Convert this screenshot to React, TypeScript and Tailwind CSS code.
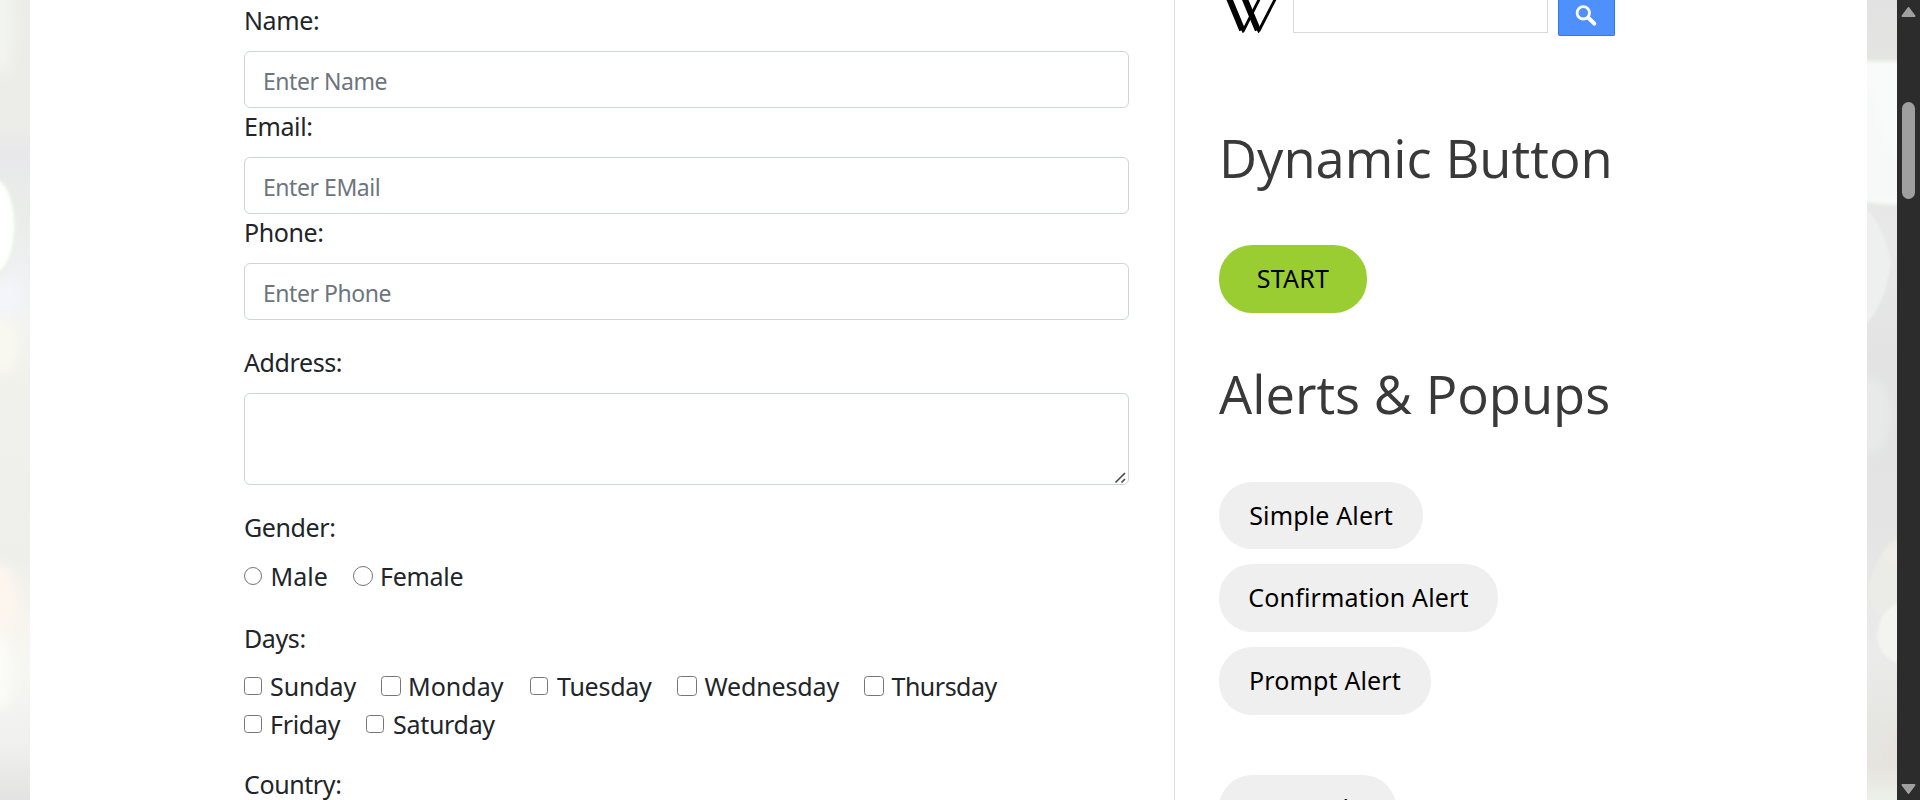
import React from "react";

const fields = [
  { label: "Name:", placeholder: "Enter Name" },
  { label: "Email:", placeholder: "Enter EMail" },
  { label: "Phone:", placeholder: "Enter Phone" },
];

type Option = { name: string; item: string; box: string; text: string };

const small = "mt-[10px] h-[18px] w-[18px]";
const large = "mt-[9px] h-[20px] w-[20px]";

const genders: Option[] = [
  { name: "Male", item: "w-[109px]", box: small, text: "ml-[8.5px]" },
  { name: "Female", item: "", box: large, text: "ml-[7px] tracking-[-0.3px]" },
];

const weekdays: Option[] = [
  { name: "Sunday", item: "w-[137px]", box: small, text: "ml-2 tracking-[-0.1px]" },
  { name: "Monday", item: "w-[149px]", box: large, text: "ml-[7px]" },
  { name: "Tuesday", item: "w-[147px]", box: small, text: "ml-[9px] tracking-[-0.25px]" },
  { name: "Wednesday", item: "w-[187px]", box: large, text: "ml-[7.5px] tracking-[-0.15px]" },
  { name: "Thursday", item: "", box: large, text: "ml-[7.5px] tracking-[-0.5px]" },
];

const weekend: Option[] = [
  { name: "Friday", item: "w-[122px]", box: small, text: "ml-2 tracking-[-0.3px]" },
  { name: "Saturday", item: "", box: small, text: "ml-[9px] tracking-[-0.3px]" },
];

const labelClass = "block h-[38px] text-[25px] leading-[38px] tracking-[-0.4px] text-[#212529]";
const pill = "rounded-[33px] bg-[#efefef] text-[25px] tracking-[0.15px] text-black";
const heading = "shrink-0 font-['Open_Sans'] text-[52.5px] leading-[72px] font-normal text-[#393939]";

function OptionRow({ options, type }: { options: Option[]; type: "radio" | "checkbox" }) {
  return (
    <div className="flex h-[38px] text-[25px] leading-[38px] text-[#212529]">
      {options.map((o) => (
        <label key={o.name} className={"flex items-start whitespace-nowrap " + o.item}>
          <input
            type={type}
            name={type}
            className={
              "shrink-0 appearance-none border-[1.5px] border-[#767676] bg-white " +
              (type === "radio" ? "rounded-full " : "rounded-[3.5px] ") +
              o.box
            }
          />
          <span className={o.text}>{o.name}</span>
        </label>
      ))}
    </div>
  );
}

function LeftBackdrop() {
  return (
    <svg className="h-[800px] w-[30px] shrink-0" viewBox="0 0 30 800">
      <defs>
        <linearGradient id="lb" x1="0" y1="0" x2="0" y2="1">
          <stop offset="0" stopColor="#ecede7" />
          <stop offset="0.16" stopColor="#ecede9" />
          <stop offset="0.19" stopColor="#e8e8ea" />
          <stop offset="0.28" stopColor="#ebedea" />
          <stop offset="0.36" stopColor="#f1f2f5" />
          <stop offset="0.42" stopColor="#f4f4ef" />
          <stop offset="0.48" stopColor="#f1f1ec" />
          <stop offset="0.7" stopColor="#eeefeb" />
          <stop offset="0.77" stopColor="#f8f4ee" />
          <stop offset="0.84" stopColor="#f6f7f3" />
          <stop offset="0.93" stopColor="#f0f1ee" />
          <stop offset="1" stopColor="#e3e3e3" />
        </linearGradient>
        <filter id="soft" x="-50%" y="-50%" width="200%" height="200%">
          <feGaussianBlur stdDeviation="1.5" />
        </filter>
        <filter id="softer" x="-100%" y="-50%" width="300%" height="200%">
          <feGaussianBlur stdDeviation="6" />
        </filter>
      </defs>
      <rect width="30" height="800" fill="url(#lb)" />
      <ellipse cx="2" cy="25" rx="12" ry="50" fill="#f3f4ef" filter="url(#softer)" />
      <ellipse cx="-8" cy="228" rx="24" ry="52" fill="#e9f2e8" filter="url(#soft)" />
      <ellipse cx="-8" cy="226" rx="22" ry="48" fill="#ffffff" filter="url(#soft)" />
      <ellipse cx="6" cy="298" rx="14" ry="18" fill="#f4f5fa" filter="url(#softer)" />
      <ellipse cx="2" cy="346" rx="14" ry="28" fill="#f9f8f0" filter="url(#softer)" />
      <ellipse cx="0" cy="598" rx="16" ry="34" fill="#fdf6ef" filter="url(#softer)" />
      <ellipse cx="0" cy="670" rx="12" ry="40" fill="#fbfbf7" filter="url(#softer)" />
    </svg>
  );
}

function RightBackdrop() {
  return (
    <svg className="h-[800px] w-[30px] shrink-0" viewBox="0 0 30 800">
      <defs>
        <linearGradient id="rb" x1="0" y1="0" x2="0" y2="1">
          <stop offset="0" stopColor="#e2e2e2" />
          <stop offset="0.07" stopColor="#e4e4e3" />
          <stop offset="0.3" stopColor="#e8e8e8" />
          <stop offset="0.45" stopColor="#e3e3e3" />
          <stop offset="0.65" stopColor="#e4e4e4" />
          <stop offset="0.82" stopColor="#ebebeb" />
          <stop offset="0.91" stopColor="#e5e6e1" />
          <stop offset="0.96" stopColor="#e6e4df" />
          <stop offset="1" stopColor="#edf0e9" />
        </linearGradient>
        <filter id="edge" x="-20%" y="-20%" width="140%" height="140%">
          <feGaussianBlur stdDeviation="1" />
        </filter>
        <filter id="haze" x="-100%" y="-50%" width="300%" height="200%">
          <feGaussianBlur stdDeviation="4" />
        </filter>
      </defs>
      <rect width="30" height="800" fill="url(#rb)" />
      <path d="M-5 60H35V205Q12 206 -5 201Z" fill="#f0f3ea" filter="url(#edge)" />
      <path d="M-5 63H35V203Q12 203 -5 199Z" fill="#f9fafa" filter="url(#edge)" />
      <path d="M8 90Q10 140 35 165V200H-5V90Z" fill="#f7f9f9" filter="url(#haze)" />
      <path d="M-5 206Q15 220 24 262Q18 308 -5 328Z" fill="#eeefef" filter="url(#edge)" />
      <ellipse cx="2" cy="415" rx="20" ry="38" fill="#e8eaea" filter="url(#haze)" />
      <path d="M35 535Q5 555 2 590Q3 620 35 630Z" fill="#ebebe7" filter="url(#edge)" />
      <ellipse cx="28" cy="555" rx="8" ry="7" fill="#f3efe6" filter="url(#haze)" />
      <path d="M35 601Q12 610 10 635Q12 660 35 664Z" fill="#f3f3f2" filter="url(#edge)" />
      <ellipse cx="28" cy="750" rx="8" ry="18" fill="#e8e1de" filter="url(#haze)" />
    </svg>
  );
}

export default function App() {
  return (
    <div className="flex h-[800px] w-[1920px] overflow-hidden bg-white font-['Noto_Sans',sans-serif]">
      <LeftBackdrop />
      <main className="flex min-w-0 flex-1 bg-white">
        <section className="w-[1145px] shrink-0 border-r border-[#dddddd] pl-[214px]">
          <form className="w-[885px]">
            {fields.map((f) => (
              <div key={f.label} className="h-[106px] pt-px">
                <label className={labelClass}>{f.label}</label>
                <input
                  placeholder={f.placeholder}
                  className="mt-3 block h-[57px] w-full rounded-[6px] border border-[#ced4da] px-[18px] pt-[2px] text-[23px] tracking-[-0.45px] placeholder:text-[#6c757d]"
                />
              </div>
            ))}
            <label className={labelClass + " mt-[25px]"}>Address:</label>
            <div className="relative mt-3 h-[92px]">
              <textarea className="block h-full w-full resize-none rounded-[6px] border border-[#ced4da]" />
              <svg className="absolute right-[2px] bottom-[1px] h-[13px] w-[13px]" viewBox="0 0 13 13" fill="none" stroke="#4f4f4f" strokeWidth="1.7">
                <path d="M1.5 11.5L11 2M7.5 11.5L11 8" />
              </svg>
            </div>
            <label className={labelClass + " mt-[23px]"}>Gender:</label>
            <div className="mt-[11px]">
              <OptionRow options={genders} type="radio" />
            </div>
            <label className={labelClass + " mt-6"}>Days:</label>
            <div className="mt-[10px]">
              <OptionRow options={weekdays} type="checkbox" />
              <OptionRow options={weekend} type="checkbox" />
            </div>
            <label className={labelClass + " mt-[22px]"}>Country:</label>
          </form>
        </section>
        <aside className="flex min-w-0 flex-1 flex-col items-start pl-[44px]">
          <div className="flex h-[36px] shrink-0 items-start">
            <svg className="h-[33px] w-[74px]" viewBox="0 0 74 33" fill="none" stroke="#000000">
              <path d="M8.7 -5L23.2 30" strokeWidth="6" />
              <path d="M24.2 -5L38.8 30" strokeWidth="6" />
              <path d="M24.2 31L42.3 -5M39.8 31L58.3 -5" strokeWidth="2.8" />
              <path d="M22 28L24 32L26 28M37.6 28L39.6 32L41.6 28" strokeWidth="1.5" fill="#000000" />
            </svg>
            <div className="h-[33px] w-[255px] border border-t-0 border-[#d9d9d9]" />
            <button className="ml-[10px] flex h-[36px] w-[57px] items-start rounded-b-[2px] border border-t-0 border-[#3079ed] bg-[#4d90fe] pt-[4px] pl-[16px]">
              <svg className="h-[24px] w-[24px]" viewBox="0 0 24 24" fill="none" stroke="#ffffff" strokeLinecap="round">
                <circle cx="8.3" cy="8.8" r="6.2" strokeWidth="2.8" />
                <path d="M13.6 14L19.3 19.6" strokeWidth="4" />
              </svg>
            </button>
          </div>
          <h2 className={heading + " mt-[86px] h-[72px]"}>Dynamic Button</h2>
          <button className="mt-[51px] h-[68px] w-[148px] shrink-0 rounded-[33px] bg-[#9acd32] text-[25px] tracking-[0.2px] text-black">
            START
          </button>
          <h2 className={heading + " mt-[45px] h-[72px]"}>Alerts &amp; Popups</h2>
          <button className={pill + " mt-[52px] h-[67px] w-[204px] shrink-0"}>Simple Alert</button>
          <button className={pill + " mt-[15px] h-[68px] w-[279px] shrink-0"}>Confirmation Alert</button>
          <button className={pill + " mt-[15px] h-[68px] w-[212px] shrink-0"}>Prompt Alert</button>
          <button className={pill + " mt-[60px] h-[68px] w-[177px] shrink-0"}>New Tab</button>
        </aside>
      </main>
      <RightBackdrop />
      <div className="flex w-[23px] shrink-0 flex-col items-center bg-[#2c2c2c] pt-[6px] pb-[5px]">
        <svg className="h-[12px] w-[15px] shrink-0" viewBox="0 0 15 12" fill="#a0a0a0" stroke="#a0a0a0" strokeWidth="2" strokeLinejoin="round">
          <path d="M7.5 2L13.5 10H1.5Z" />
        </svg>
        <div className="mt-[84px] h-[97px] w-[13px] rounded-full bg-[#9f9f9f]" />
        <svg className="mt-auto h-[12px] w-[15px] shrink-0" viewBox="0 0 15 12" fill="#a0a0a0" stroke="#a0a0a0" strokeWidth="2" strokeLinejoin="round">
          <path d="M7.5 10L13.5 2H1.5Z" />
        </svg>
      </div>
    </div>
  );
}
